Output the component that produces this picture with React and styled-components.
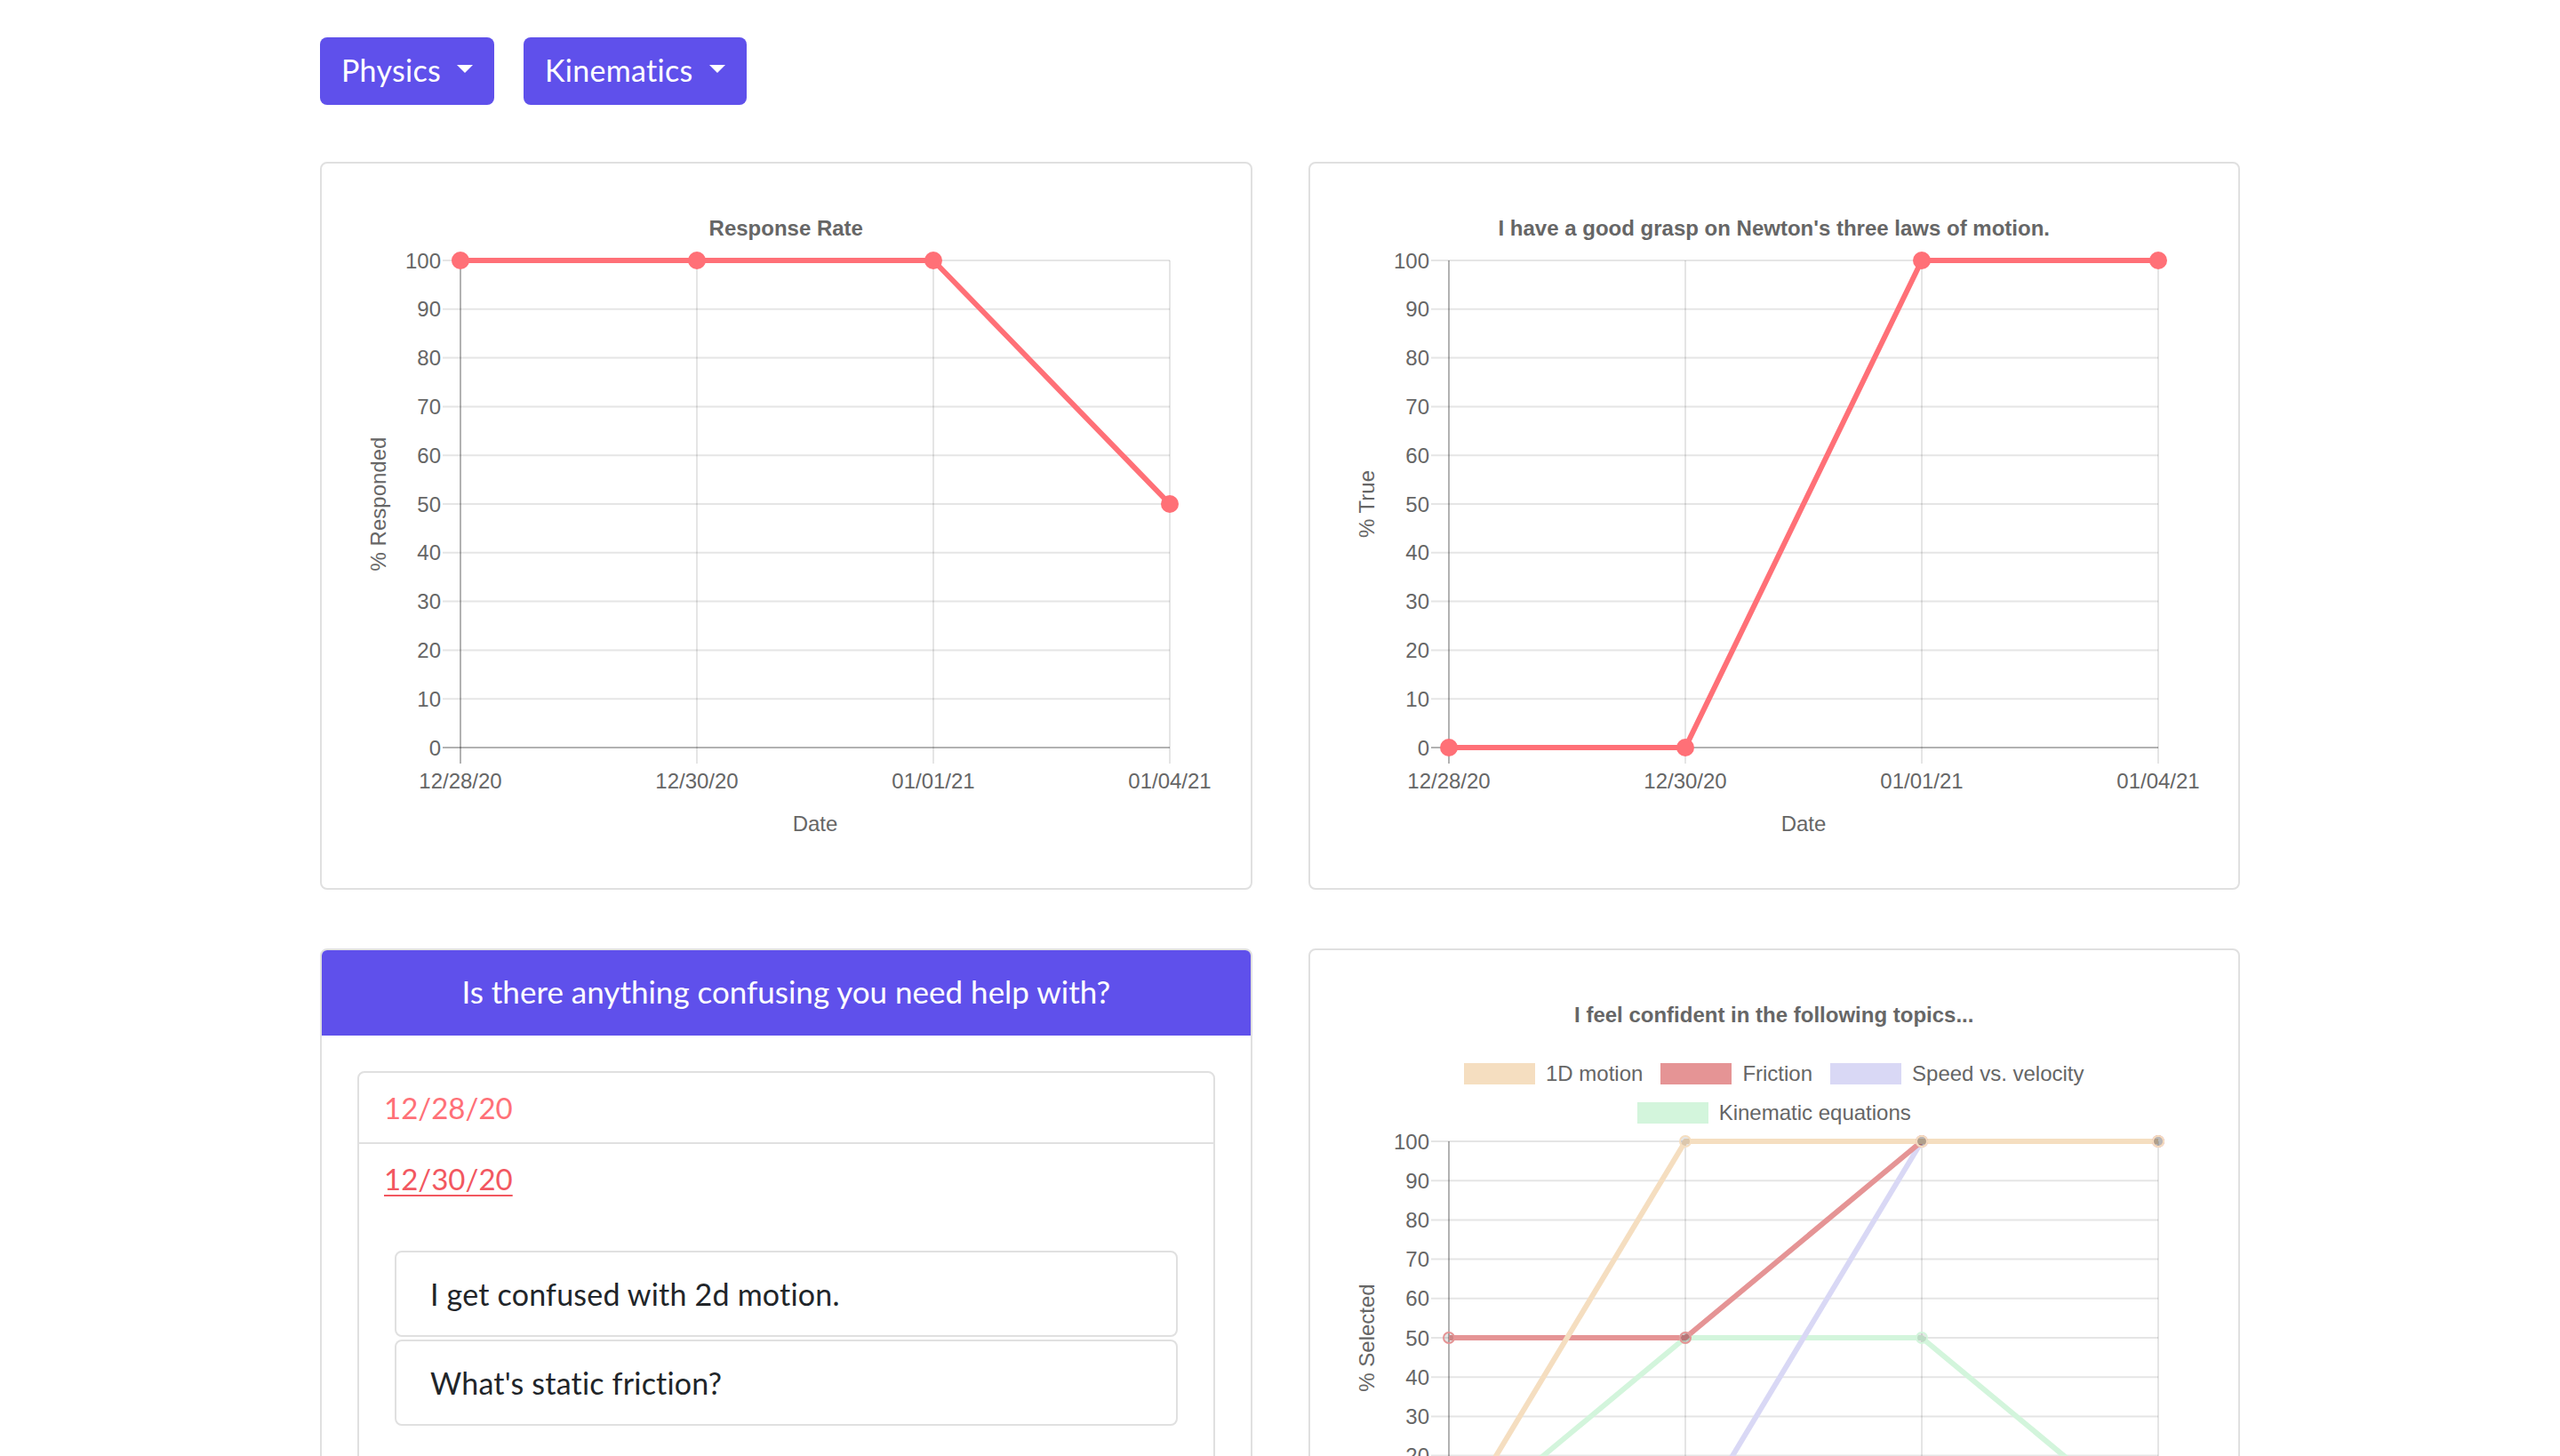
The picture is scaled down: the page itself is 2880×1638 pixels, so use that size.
import React from 'react';
import styled, { createGlobalStyle } from 'styled-components';

const GlobalStyle = createGlobalStyle`
  html, body { margin: 0; padding: 0; background: #ffffff; }
  body { font-family: Lato, "Open Sans", sans-serif; color: #212529; }
  * { box-sizing: border-box; }
`;

const BRAND = '#5f50eb';
const CHART_FONT = '"Liberation Sans", Arial, Helvetica, sans-serif';

const Page = styled.div`
  width: 2160px;
  margin: 0 auto;
  padding: 42px 0 80px;
`;

const Toolbar = styled.div`
  display: flex;
  gap: 33px;
`;

const DropdownButton = styled.button`
  display: inline-flex;
  align-items: center;
  height: 76px;
  padding: 0 24px 2px;
  background: ${BRAND};
  color: #ffffff;
  border: 0;
  border-radius: 8px;
  font-family: inherit;
  font-size: 34px;
  line-height: 1;
  letter-spacing: 0.3px;
  cursor: pointer;

  &::after {
    content: "";
    margin-left: 18px;
    margin-top: -4px;
    border-top: 9px solid #ffffff;
    border-left: 9px solid transparent;
    border-right: 9px solid transparent;
  }
`;

const Grid = styled.div`
  display: grid;
  grid-template-columns: 1fr 1fr;
  column-gap: 63px;
  row-gap: 66px;
  margin-top: 64px;
`;

const Card = styled.div`
  display: flex;
  flex-direction: column;
  height: 819px;
  background: #ffffff;
  border: 2px solid #e0e0e0;
  border-radius: 8px;
  overflow: hidden;
`;

const ChartTitle = styled.div`
  margin-top: 61px;
  font-family: ${CHART_FONT};
  font-weight: bold;
  font-size: 24px;
  line-height: 24px;
  color: #666666;
  text-align: center;
`;

const Legend = styled.div`
  display: flex;
  flex-wrap: wrap;
  justify-content: center;
  column-gap: 20px;
  row-gap: 20px;
  max-width: 760px;
  margin: 42px auto 0;
`;

const LegendItem = styled.div`
  display: flex;
  align-items: center;
  gap: 12px;
  font-family: ${CHART_FONT};
  font-size: 24px;
  line-height: 24px;
  color: #666666;
`;

const Swatch = styled.span`
  width: 80px;
  height: 24px;
  background: ${(p) => p.$color};
`;

const Plot = styled.svg`
  display: block;
  width: 100%;
  flex: none;
`;

const TickLabel = styled.text`
  font-family: ${CHART_FONT};
  font-size: 24px;
  fill: #666666;
`;

const GridLine = styled.line`
  stroke: ${(p) => (p.$zero ? 'rgba(0,0,0,0.3)' : 'rgba(0,0,0,0.1)')};
  stroke-width: 2;
`;

const Series = styled.polyline`
  fill: none;
  stroke: ${(p) => p.$color};
  stroke-width: 6;
  stroke-linejoin: round;
`;

const Point = styled.circle`
  fill: ${(p) => p.$fill};
  stroke: ${(p) => p.$color};
  stroke-width: 2;
`;

const HelpHeader = styled.div`
  padding: 24px 20px 28px;
  background: ${BRAND};
  color: #ffffff;
  font-size: 35px;
  line-height: 44px;
  text-align: center;
`;

const HelpBody = styled.div`
  padding: 40px;
`;

const ListGroup = styled.div`
  border: 2px solid #e0e0e0;
  border-radius: 8px;
`;

const ListItem = styled.div`
  & + & {
    border-top: 2px solid #e0e0e0;
  }
`;

const DateLink = styled.div`
  padding: 20px 28px;
  font-size: 33px;
  line-height: 38px;
  color: ${(p) => (p.$active ? '#f25760' : '#ff7077')};
  text-decoration: ${(p) => (p.$active ? 'underline' : 'none')};
  text-underline-offset: 5px;
  text-decoration-thickness: 2px;
`;

const Responses = styled.div`
  display: flex;
  flex-direction: column;
  gap: 3px;
  padding: 42px 40px 40px;
`;

const ResponseCard = styled.div`
  padding: 26px 38px;
  border: 2px solid #e0e0e0;
  border-radius: 8px;
  font-size: 34px;
  line-height: 41px;
  letter-spacing: 0.2px;
  color: #212529;
`;

const XS = [156, 422, 688, 954];
const DATES = ['12/28/20', '12/30/20', '01/01/21', '01/04/21'];
const TICKS = [0, 10, 20, 30, 40, 50, 60, 70, 80, 90, 100];

function LineChart({ height, top, bottom, yTitle, series, pointRadius }) {
  const yOf = (v) => bottom - ((bottom - top) * v) / 100;
  const midY = (top + bottom) / 2;
  const drawn = [...series].reverse();
  return (
    <Plot height={height}>
      {TICKS.map((t) => (
        <GridLine key={'h' + t} $zero={t === 0} x1={136} x2={XS[3]} y1={yOf(t)} y2={yOf(t)} />
      ))}
      {XS.map((x, i) => (
        <GridLine key={'v' + i} $zero={i === 0} x1={x} x2={x} y1={top} y2={bottom + 18} />
      ))}
      {TICKS.map((t) => (
        <TickLabel key={'l' + t} x={134} y={yOf(t)} textAnchor="end" dominantBaseline="central">
          {t}
        </TickLabel>
      ))}
      {XS.map((x, i) => (
        <TickLabel key={'d' + i} x={x} y={bottom + 37} textAnchor="middle" dominantBaseline="central">
          {DATES[i]}
        </TickLabel>
      ))}
      <TickLabel x={(XS[0] + XS[3]) / 2} y={bottom + 85} textAnchor="middle" dominantBaseline="central">
        Date
      </TickLabel>
      <TickLabel
        x={63}
        y={midY}
        textAnchor="middle"
        dominantBaseline="central"
        transform={`rotate(-90 63 ${midY})`}
      >
        {yTitle}
      </TickLabel>
      {drawn.map((s) => (
        <Series key={s.label} $color={s.color} points={s.data.map((v, i) => `${XS[i]},${yOf(v)}`).join(' ')} />
      ))}
      {drawn.map((s) =>
        s.data.map((v, i) => (
          <Point
            key={s.label + i}
            cx={XS[i]}
            cy={yOf(v)}
            r={pointRadius}
            $color={s.color}
            $fill={s.pointFill || s.color}
          />
        ))
      )}
    </Plot>
  );
}

const RED = '#ff7077';

const topicSeries = [
  { label: '1D motion', color: '#f5dec0', data: [0, 100, 100, 100], pointFill: 'rgba(0,0,0,0.1)' },
  { label: 'Friction', color: '#e59495', data: [50, 50, 100, 100], pointFill: 'rgba(0,0,0,0.1)' },
  { label: 'Speed vs. velocity', color: '#d9d8f5', data: [0, 0, 100, 100], pointFill: 'rgba(0,0,0,0.1)' },
  { label: 'Kinematic equations', color: '#d3f5dc', data: [0, 50, 50, 0], pointFill: 'rgba(0,0,0,0.1)' },
];

export default function App() {
  return (
    <>
      <GlobalStyle />
      <Page>
        <Toolbar>
          <DropdownButton>Physics</DropdownButton>
          <DropdownButton>Kinematics</DropdownButton>
        </Toolbar>
        <Grid>
          <Card>
            <ChartTitle>Response Rate</ChartTitle>
            <LineChart
              height={731}
              top={24}
              bottom={572}
              yTitle="% Responded"
              pointRadius={9}
              series={[{ label: 'rate', color: RED, data: [100, 100, 100, 50] }]}
            />
          </Card>
          <Card>
            <ChartTitle>I have a good grasp on Newton's three laws of motion.</ChartTitle>
            <LineChart
              height={731}
              top={24}
              bottom={572}
              yTitle="% True"
              pointRadius={9}
              series={[{ label: 'true', color: RED, data: [0, 0, 100, 100] }]}
            />
          </Card>
          <Card>
            <HelpHeader>Is there anything confusing you need help with?</HelpHeader>
            <HelpBody>
              <ListGroup>
                <ListItem>
                  <DateLink>12/28/20</DateLink>
                </ListItem>
                <ListItem>
                  <DateLink $active>12/30/20</DateLink>
                  <Responses>
                    <ResponseCard>I get confused with 2d motion.</ResponseCard>
                    <ResponseCard>What's static friction?</ResponseCard>
                  </Responses>
                </ListItem>
              </ListGroup>
            </HelpBody>
          </Card>
          <Card>
            <ChartTitle>I feel confident in the following topics...</ChartTitle>
            <Legend>
              {topicSeries.map((s) => (
                <LegendItem key={s.label}>
                  <Swatch $color={s.color} />
                  {s.label}
                </LegendItem>
              ))}
            </Legend>
            <LineChart
              height={620}
              top={20}
              bottom={462}
              yTitle="% Selected"
              pointRadius={6}
              series={topicSeries}
            />
          </Card>
        </Grid>
      </Page>
    </>
  );
}
